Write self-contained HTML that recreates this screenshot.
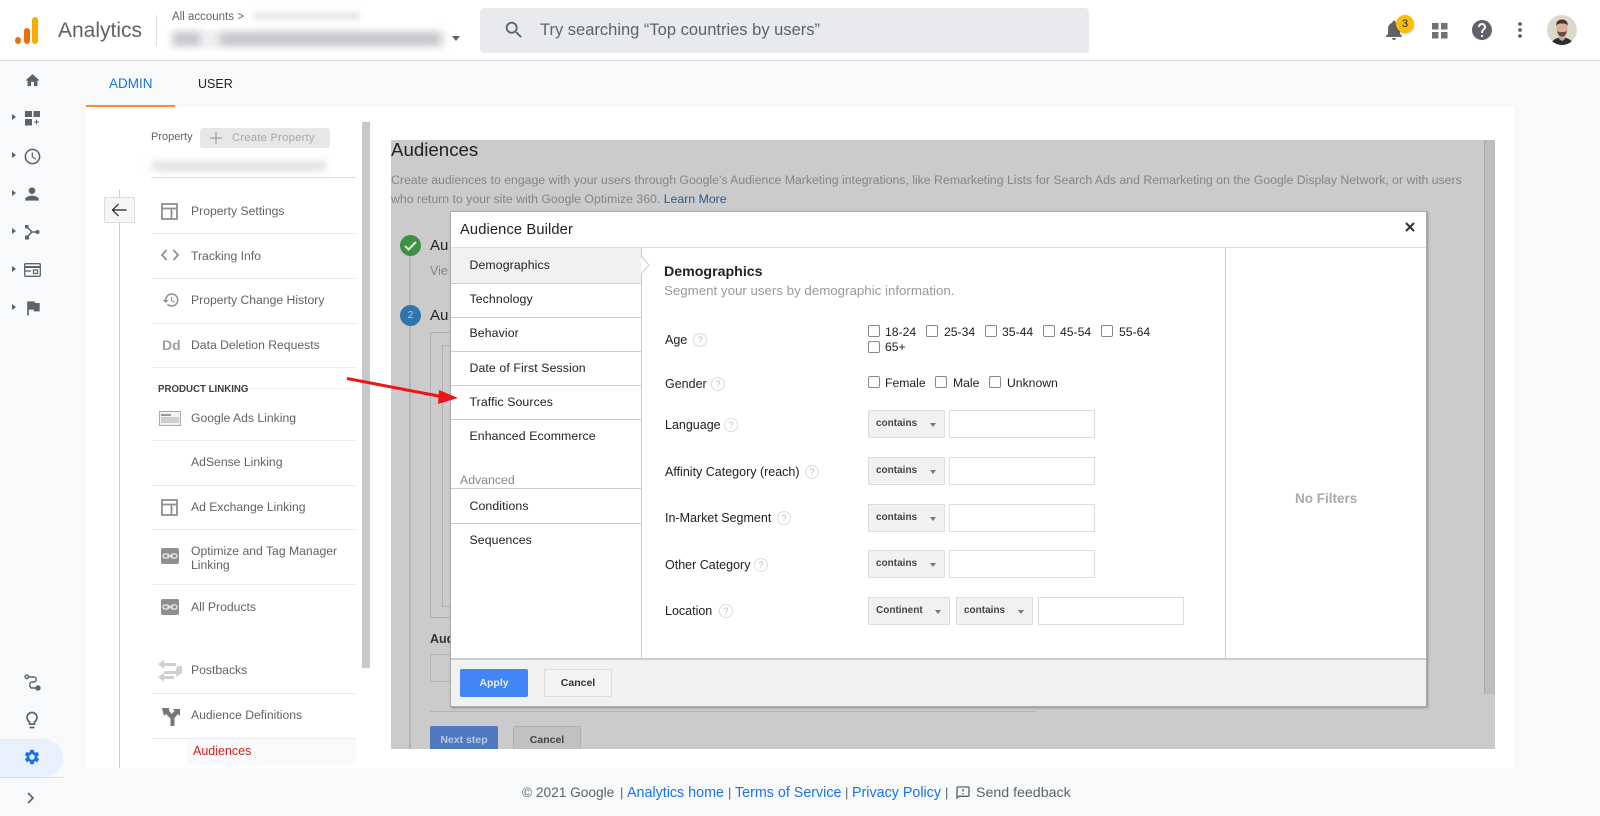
<!DOCTYPE html>
<html><head><meta charset="utf-8">
<style>
html,body{margin:0;padding:0;width:1600px;height:816px;overflow:hidden;background:#f8f9fa;font-family:"Liberation Sans",sans-serif;color:#3c4043}
.a{position:absolute}
.t{position:absolute;white-space:nowrap;line-height:16px;font-size:13px}
.n{color:#5f6368;left:191px;font-size:12.2px}
.s{position:absolute;left:152px;width:204px;height:1px;background:#e8eaed}
.m{left:469.5px;color:#212121;font-size:12.3px;letter-spacing:.1px}
.l{position:absolute;left:451px;width:190px;height:1px;background:#ccc}
.f{left:665px;color:#212121;font-size:12.5px}
.q{position:absolute;width:12px;height:12px;border:1px solid #ddd;border-radius:50%;color:#bbb;font-size:9px;line-height:12px;text-align:center}
.c{position:absolute;width:10px;height:10px;border:1px solid #888;border-radius:2px;background:#fff}
.cl{font-size:12.2px;color:#212121}
.sel{position:absolute;background:#f1f1f1;border:1px solid #ddd;height:26px;border-radius:1px}
.sel b{position:absolute;left:7px;top:6px;font-size:10px;line-height:14px;color:#444}
.sel i{position:absolute;top:12px;width:0;height:0;border:3.5px solid transparent;border-top:4px solid #777;border-bottom:0}
.inp{position:absolute;background:#fff;border:1px solid #ddd;height:26px}
svg{position:absolute;display:block}
</style></head><body>

<!-- header -->
<div class="a" style="left:0;top:0;width:1600px;height:60px;background:#fff;border-bottom:1px solid #dadce0"></div>
<div class="a" style="left:15px;top:37px;width:6px;height:7px;border-radius:50%;background:#e8710a"></div>
<div class="a" style="left:24px;top:28px;width:6px;height:16px;border-radius:3px;background:#e8710a"></div>
<div class="a" style="left:32px;top:17px;width:6px;height:27px;border-radius:3px;background:#f9ab00"></div>
<div class="t" style="left:58px;top:19px;font-size:21px;line-height:24px;color:#5f6368">Analytics</div>
<div class="a" style="left:156px;top:15px;width:1px;height:31px;background:#e0e0e0"></div>
<div class="t" style="left:172px;top:9px;font-size:11.5px;color:#5f6368">All accounts &gt;</div>
<div class="a" style="left:254px;top:12px;width:106px;height:8px;background:#e6e7e9;filter:blur(3px)"></div>
<div class="a" style="left:170px;top:30px;width:276px;height:18px;background:#eeeff0;filter:blur(3px)"></div>
<div class="a" style="left:174px;top:33px;width:26px;height:12px;background:#c2c4c7;filter:blur(4px)"></div>
<div class="a" style="left:220px;top:33px;width:220px;height:12px;background:#c2c4c7;filter:blur(4px)"></div>
<div class="a" style="left:452px;top:36px;width:0;height:0;border:4.5px solid transparent;border-top:5px solid #5f6368;border-bottom:0"></div>
<div class="a" style="left:480px;top:8px;width:609px;height:45px;background:#e8eaed;border-radius:4px"></div>
<svg style="left:503px;top:19px" width="22" height="22" viewBox="0 0 24 24" fill="#5f6368"><path d="M15.5 14h-.79l-.28-.27C15.41 12.59 16 11.11 16 9.5 16 5.91 13.09 3 9.5 3S3 5.91 3 9.5 5.91 16 9.5 16c1.61 0 3.09-.59 4.23-1.57l.27.28v.79l5 4.99L20.49 19l-4.99-5zm-6 0C7.01 14 5 11.99 5 9.5S7.01 5 9.5 5 14 7.01 14 9.5 11.99 14 9.5 14z"/></svg>
<div class="t" style="left:540px;top:22px;font-size:16.5px;color:#5f6368">Try searching “Top countries by users”</div>

<svg style="left:1382px;top:18px" width="24" height="24" viewBox="0 0 24 24" fill="#5f6368"><path d="M12 22c1.1 0 2-.9 2-2h-4c0 1.1.9 2 2 2zm6-6v-5c0-3.07-1.63-5.64-4.5-6.32V4c0-.83-.67-1.5-1.5-1.5s-1.5.67-1.5 1.5v.68C7.64 5.36 6 7.92 6 11v5l-2 2v1h16v-1l-2-2z"/></svg>
<div class="a" style="left:1396px;top:15px;width:18px;height:18px;border-radius:50%;background:#fbbc04;text-align:center;font-size:11px;line-height:18px;color:#222;box-shadow:0 1px 2px rgba(0,0,0,.25)">3</div>
<svg style="left:1428px;top:18px" width="24" height="24" viewBox="0 0 24 24" fill="#6f7276"><path d="M4 5h6.5v6.5H4zM13 5h6.5v6.5H13zM4 14h6.5v6.5H4zM13 14h6.5v6.5H13z"/></svg>
<svg style="left:1470px;top:18px" width="24" height="24" viewBox="0 0 24 24" fill="#5f6368"><path d="M12 2C6.48 2 2 6.48 2 12s4.48 10 10 10 10-4.48 10-10S17.52 2 12 2zm1 17h-2v-2h2v2zm2.07-7.75l-.9.92C13.45 12.9 13 13.5 13 15h-2v-.5c0-1.1.45-2.1 1.17-2.83l1.24-1.26c.37-.36.59-.86.59-1.41 0-1.1-.9-2-2-2s-2 .9-2 2H8c0-2.21 1.79-4 4-4s4 1.79 4 4c0 .88-.36 1.68-.93 2.25z"/></svg>
<svg style="left:1508px;top:18px" width="24" height="24" viewBox="0 0 24 24" fill="#5f6368"><circle cx="12" cy="6" r="1.9"/><circle cx="12" cy="12" r="1.9"/><circle cx="12" cy="18" r="1.9"/></svg>
<svg style="left:1547px;top:15px" width="30" height="30" viewBox="0 0 30 30"><defs><clipPath id="av"><circle cx="15" cy="15" r="15"/></clipPath></defs><g clip-path="url(#av)"><rect width="30" height="30" fill="#ddd8cc"/><path d="M4 30c1-6 6-7 11-8 5 1 10 2 11 8z" fill="#2b2e33"/><path d="M12 20h6v4l-3 2-3-2z" fill="#d0a78f"/><ellipse cx="15" cy="13.5" rx="5.5" ry="7.5" fill="#d9b29b"/><path d="M9.5 11c-1-5 3-6.5 5.500-6.500s6.500 1.500 5.500 6.500c-1-2.500-3-2.500-5.500-2.500s-4.500 0-5.500 2.500z" fill="#4a3528"/><path d="M10 16c1 5 3 5.500 5 5.500s4-.5 5-5.500c-2 1-3 1-5 1s-3 0-5-1z" fill="#6a5040"/></g></svg>

<!-- tabs -->
<div class="t" style="left:109px;top:76px;font-size:13.5px;color:#1a73e8">ADMIN</div>
<div class="t" style="left:198px;top:76px;font-size:12.5px;color:#202124">USER</div>
<div class="a" style="left:86px;top:105px;width:89px;height:2px;background:#f5902a"></div>

<!-- white panel -->
<div class="a" style="left:86px;top:107px;width:1428px;height:661px;background:#fff"></div>

<!-- sidebar icons -->
<svg style="left:23.5px;top:72px" width="17" height="17" viewBox="0 0 24 24" fill="#5f6368"><path d="M10 20v-6h4v6h5v-8h3L12 3 2 12h3v8z"/></svg>
<div class="a" style="left:12px;top:114px;border:3.5px solid transparent;border-left:4px solid #5f6368;border-right:0"></div>
<div class="a" style="left:12px;top:152px;border:3.5px solid transparent;border-left:4px solid #5f6368;border-right:0"></div>
<div class="a" style="left:12px;top:190px;border:3.5px solid transparent;border-left:4px solid #5f6368;border-right:0"></div>
<div class="a" style="left:12px;top:228px;border:3.5px solid transparent;border-left:4px solid #5f6368;border-right:0"></div>
<div class="a" style="left:12px;top:266px;border:3.5px solid transparent;border-left:4px solid #5f6368;border-right:0"></div>
<div class="a" style="left:12px;top:304px;border:3.5px solid transparent;border-left:4px solid #5f6368;border-right:0"></div>
<svg style="left:24px;top:110px" width="17" height="17" viewBox="0 0 17 17" fill="#5f6368"><path d="M1 1h7v6H1zM9.500 1H16v6H9.500zM1 9h7v6.500H1zM12 9.500h1v2h2v1h-2v2h-1v-2h-2v-1h2z"/></svg>
<svg style="left:22.5px;top:146.5px" width="19" height="19" viewBox="0 0 24 24" fill="#5f6368"><path d="M11.990 2C6.470 2 2 6.480 2 12s4.470 10 9.990 10C17.520 22 22 17.520 22 12S17.520 2 11.990 2zM12 20c-4.420 0-8-3.580-8-8s3.580-8 8-8 8 3.580 8 8-3.580 8-8 8zm.5-13H11v6l5.250 3.150.75-1.230-4.500-2.670z"/></svg>
<svg style="left:22px;top:184px" width="20" height="20" viewBox="0 0 24 24" fill="#5f6368"><path d="M12 12c2.210 0 4-1.790 4-4s-1.790-4-4-4-4 1.790-4 4 1.790 4 4 4zm0 2c-2.670 0-8 1.340-8 4v2h16v-2c0-2.660-5.330-4-8-4z"/></svg>
<svg style="left:24px;top:224px" width="16" height="16" viewBox="0 0 16 16" fill="#5f6368" stroke="#5f6368"><path d="M2 2l6 6-6 6M8 8h5" fill="none" stroke-width="1.500"/><rect x="1" y="1" width="3.500" height="3.500" stroke="none"/><rect x="1" y="11.500" width="4" height="4" stroke="none"/><circle cx="13.500" cy="8" r="2" stroke="none"/></svg>
<svg style="left:24px;top:263px" width="17" height="14" viewBox="0 0 17 14" fill="none" stroke="#5f6368" stroke-width="1.300"><rect x=".7" y=".7" width="15.600" height="12.600" rx="1"/><path d="M1 4h15" stroke-width="2"/><path d="M9.500 7h4v3.500h-4zM1 8h6" stroke-width="1.300"/></svg>
<svg style="left:23px;top:298px" width="20" height="20" viewBox="0 0 24 24" fill="#5f6368"><path d="M14.400 6L14 4H5v17h2v-7h5.600l.4 2h7V6z"/></svg>
<svg style="left:24px;top:674px" width="17" height="17" viewBox="0 0 17 17" fill="none" stroke="#5f6368" stroke-width="1.400"><circle cx="2.800" cy="2.800" r="1.700"/><path d="M5 3h5c3 0 3 5 0 5H8c-3 0-3 6 0 6h5"/><circle cx="14" cy="14" r="2" fill="#5f6368"/></svg>
<svg style="left:22px;top:710px" width="20" height="20" viewBox="0 0 24 24" fill="#5f6368"><path d="M9 21c0 .55.45 1 1 1h4c.55 0 1-.45 1-1v-1H9v1zm3-19C8.140 2 5 5.140 5 9c0 2.380 1.190 4.470 3 5.740V17c0 .55.45 1 1 1h6c.55 0 1-.45 1-1v-2.260c1.810-1.270 3-3.360 3-5.740 0-3.860-3.140-7-7-7zm2.850 11.100l-.85.6V16h-4v-2.300l-.85-.6C7.800 12.160 7 10.630 7 9c0-2.760 2.240-5 5-5s5 2.240 5 5c0 1.630-.8 3.160-2.150 4.100z"/></svg>
<div class="a" style="left:0;top:739px;width:63px;height:38px;background:#e8f0fe;border-radius:0 19px 19px 0"></div>
<svg style="left:23px;top:748px" width="18" height="18" viewBox="0 0 24 24" fill="#1a73e8"><path d="M19.140 12.940c.04-.3.06-.61.06-.94 0-.32-.02-.64-.07-.94l2.030-1.580a.49.49 0 0 0 .12-.61l-1.920-3.320a.488.488 0 0 0-.59-.22l-2.390.96c-.5-.38-1.030-.7-1.620-.94l-.36-2.540a.484.484 0 0 0-.48-.41h-3.840c-.24 0-.43.17-.47.41l-.36 2.540c-.59.24-1.130.57-1.620.94l-2.390-.96c-.22-.08-.47 0-.59.22L2.740 8.870c-.12.21-.08.47.12.61l2.030 1.580c-.05.3-.09.63-.09.94s.02.64.07.94l-2.030 1.580a.49.49 0 0 0-.12.61l1.920 3.320c.12.22.37.29.59.22l2.390-.96c.5.38 1.030.7 1.620.94l.36 2.540c.05.24.24.41.48.41h3.840c.24 0 .44-.17.47-.41l.36-2.540c.59-.24 1.130-.56 1.620-.94l2.390.96c.22.08.47 0 .59-.22l1.920-3.320c.12-.22.07-.47-.12-.61l-2.010-1.580zM12 15.600c-1.980 0-3.600-1.620-3.600-3.600s1.620-3.600 3.600-3.600 3.600 1.620 3.600 3.600-1.620 3.600-3.600 3.600z"/></svg>
<div class="a" style="left:0;top:777px;width:63px;height:1px;background:#e0e0e0"></div>
<svg style="left:24px;top:791px" width="14" height="14" viewBox="0 0 14 14" fill="none" stroke="#5f6368" stroke-width="1.700"><path d="M4 2l5 5-5 5"/></svg>

<!-- admin column -->
<div class="a" style="left:119px;top:190px;width:1px;height:578px;background:#ccc"></div>
<div class="a" style="left:104px;top:197px;width:29px;height:24px;background:#f5f5f5;border:1px solid #ddd;border-radius:1px"></div>
<svg style="left:111px;top:202px" width="16" height="16" viewBox="0 0 16 16" fill="none" stroke="#222" stroke-width="1.200"><path d="M15.500 8H1.500M7.500 2L1.500 8l6 6"/></svg>
<div class="t" style="left:151px;top:129px;font-size:11px;color:#5f6368">Property</div>
<div class="a" style="left:200px;top:128px;width:130px;height:20px;background:#e6e7e8;border-radius:3px"></div>
<svg style="left:209px;top:131px" width="14" height="14" viewBox="0 0 14 14" stroke="#a8a8a8" stroke-width="1.400"><path d="M7 1v12M1 7h12"/></svg>
<div class="t" style="left:232px;top:130px;font-size:11.3px;color:#a8a8a8;letter-spacing:.2px">Create Property</div>
<div class="a" style="left:152px;top:162px;width:174px;height:8px;background:#d8dadc;filter:blur(4px)"></div>
<div class="a" style="left:151px;top:177px;width:205px;height:1px;background:#dadce0"></div>

<svg style="left:161px;top:203px" width="17" height="17" viewBox="0 0 17 17" fill="none" stroke="#8f8f8f" stroke-width="1.800"><rect x="1" y="1" width="15" height="15"/><path d="M1 5.500h15M10.500 5.500V16"/></svg>
<div class="t n" style="top:203px">Property Settings</div><div class="s" style="top:233px"></div>
<svg style="left:160px;top:247px" width="20" height="16" viewBox="0 0 20 16" fill="none" stroke="#8f8f8f" stroke-width="1.800"><path d="M6.500 3L2 8l4.500 5M13.500 3L18 8l-4.500 5"/></svg>
<div class="t n" style="top:248px">Tracking Info</div><div class="s" style="top:278px"></div>
<svg style="left:162px;top:291px" width="18" height="18" viewBox="0 0 24 24" fill="#8f8f8f"><path d="M13 3c-4.970 0-9 4.030-9 9H1l3.890 3.890.07.14L9 12H6c0-3.870 3.130-7 7-7s7 3.130 7 7-3.130 7-7 7c-1.930 0-3.680-.79-4.940-2.060l-1.420 1.420C8.270 19.990 10.510 21 13 21c4.970 0 9-4.030 9-9s-4.030-9-9-9zm-1 5v5l4.280 2.540.72-1.210-3.500-2.080V8H12z"/></svg>
<div class="t n" style="top:292px">Property Change History</div><div class="s" style="top:323px"></div>
<div class="t" style="left:162px;top:337px;font-size:14px;font-weight:bold;color:#a0a0a0">Dd</div>
<div class="t n" style="top:337px">Data Deletion Requests</div><div class="s" style="top:367px"></div>
<div class="a" style="left:152px;top:388px;width:204px;height:1px;background:#f0f0f0"></div>
<div class="t" style="left:158px;top:382px;font-size:9.7px;font-weight:bold;color:#3c4043">PRODUCT LINKING</div>

<svg style="left:159px;top:411px" width="22" height="15" viewBox="0 0 22 15"><rect x=".5" y=".5" width="21" height="14" fill="#f2f2f2" stroke="#aaa"/><rect x="2" y="3" width="10" height="2" fill="#999"/><path d="M2 7h18M2 9h18M2 11h18" stroke="#aaa"/></svg>
<div class="t n" style="top:410px">Google Ads Linking</div><div class="s" style="top:440px"></div>
<div class="t n" style="top:454px">AdSense Linking</div><div class="s" style="top:485px"></div>
<svg style="left:161px;top:499px" width="17" height="17" viewBox="0 0 17 17" fill="none" stroke="#8f8f8f" stroke-width="1.800"><rect x="1" y="1" width="15" height="15"/><path d="M1 5.500h15M10.500 5.500V16"/></svg>
<div class="t n" style="top:499px">Ad Exchange Linking</div><div class="s" style="top:529px"></div>
<svg style="left:161px;top:548px" width="18" height="16" viewBox="0 0 18 16"><rect width="18" height="16" rx="2" fill="#8f8f8f"/><g fill="none" stroke="#eee" stroke-width="1.300"><rect x="2" y="6" width="6" height="4" rx="2"/><rect x="10" y="6" width="6" height="4" rx="2"/><path d="M6 8h6"/></g></svg>
<div class="t n" style="top:543px">Optimize and Tag Manager</div>
<div class="t n" style="top:557px">Linking</div><div class="s" style="top:584px"></div>
<svg style="left:161px;top:599px" width="18" height="16" viewBox="0 0 18 16"><rect width="18" height="16" rx="2" fill="#8f8f8f"/><g fill="none" stroke="#eee" stroke-width="1.300"><rect x="2" y="6" width="6" height="4" rx="2"/><rect x="10" y="6" width="6" height="4" rx="2"/><path d="M6 8h6"/></g></svg>
<div class="t n" style="top:599px">All Products</div>
<svg style="left:158px;top:659px" width="24" height="24" viewBox="0 0 24 24" fill="#d0d0d0"><path d="M0 5l6-4v3h12v3H6v3zM24 14l-6 4v-3H6v-3h12V9zM0 18l6-4v3h10v3H6v3zM19 7h5v7h-5z"/></svg>
<div class="t n" style="top:662px">Postbacks</div><div class="s" style="top:693px"></div>
<svg style="left:162px;top:708px" width="18" height="18" viewBox="0 0 18 18" fill="#777"><path d="M0 0h7v2.500L9.500 6l3-3L11 1h7v7l-2-2-3.500 4v8h-4v-7.500L4 6 2 8z"/></svg>
<div class="t n" style="top:707px">Audience Definitions</div><div class="s" style="top:738px"></div>
<div class="a" style="left:187px;top:739px;width:169px;height:26px;background:#f8f9fa"></div>
<div class="t" style="left:193px;top:743px;font-size:12.5px;color:#d32020">Audiences</div>
<div class="a" style="left:362px;top:122px;width:8px;height:546px;background:#c8c8c8"></div>

<!-- dimmed page -->
<div class="a" style="left:391px;top:140px;width:1104px;height:609px;background:#cbcbcb"></div>
<div class="a" style="left:1484px;top:140px;width:11px;height:554px;background:#bdbdbd;border-left:1px solid #aaa;box-sizing:border-box"></div>
<div class="t" style="left:391px;top:140px;font-size:18.7px;line-height:20px;color:#222">Audiences</div>
<div class="t" style="left:391px;top:172px;color:#858585;font-size:12.28px">Create audiences to engage with your users through Google's Audience Marketing integrations, like Remarketing Lists for Search Ads and Remarketing on the Google Display Network, or with users</div>
<div class="t" style="left:391px;top:191px;color:#858585;font-size:12.3px">who return to your site with Google Optimize 360. <span style="color:#2d5a88">Learn More</span></div>
<div class="a" style="left:409px;top:244px;width:2px;height:505px;background:#b4b4b4"></div>
<div class="a" style="left:400px;top:235px;width:21px;height:21px;border-radius:50%;background:#3f9142"></div>
<svg style="left:403px;top:238px" width="15" height="15" viewBox="0 0 15 15" fill="none" stroke="#d8e8d8" stroke-width="2.200"><path d="M2 8l3.500 3.500L13 4"/></svg>
<div class="a" style="left:400px;top:305px;width:21px;height:21px;border-radius:50%;background:#2f74ad;color:#bcd;text-align:center;font-size:10px;line-height:21px">2</div>
<div class="t" style="left:430px;top:238px;font-size:15px;color:#222">Au</div>
<div class="t" style="left:430px;top:263px;font-size:12.5px;color:#858585">Vie</div>
<div class="t" style="left:430px;top:308px;font-size:15px;color:#222">Au</div>
<div class="a" style="left:430px;top:332px;width:40px;height:286px;border:1px solid #b0b0b0;box-sizing:border-box"></div>
<div class="a" style="left:442px;top:345px;width:30px;height:262px;border:1px solid #b0b0b0;box-sizing:border-box"></div>
<div class="t" style="left:430px;top:631px;font-size:12.5px;font-weight:bold;color:#333">Aud</div>
<div class="a" style="left:430px;top:654px;width:40px;height:28px;border:1px solid #b4b4b4;box-sizing:border-box"></div>
<div class="a" style="left:430px;top:711px;width:606px;height:1px;background:#b4b4b4"></div>
<div class="a" style="left:430px;top:726px;width:68px;height:23px;background:#4f79c1;border-radius:2px 2px 0 0;color:#b9c8e0;font-size:10.5px;font-weight:bold;text-align:center;line-height:28px;overflow:hidden">Next step</div>
<div class="a" style="left:513px;top:726px;width:68px;height:23px;background:#c1c1c1;border:1px solid #b0b0b0;border-bottom:0;box-sizing:border-box;border-radius:2px 2px 0 0;color:#444;font-size:10.5px;font-weight:bold;text-align:center;line-height:26px;overflow:hidden">Cancel</div>

<!-- dialog -->
<div class="a" style="left:450px;top:211px;width:977px;height:496px;background:#fff;border:1px solid #aaa;box-sizing:border-box;box-shadow:1px 1px 2px rgba(0,0,0,.3)"></div>
<div class="t" style="left:460px;top:222px;font-size:14.7px;color:#222;letter-spacing:.12px">Audience Builder</div>
<svg style="left:1404px;top:221px" width="12" height="12" viewBox="0 0 12 12" stroke="#333" stroke-width="2"><path d="M2 2l8 8M10 2l-8 8"/></svg>
<div class="a" style="left:451px;top:247px;width:975px;height:1px;background:#ddd"></div>
<div class="a" style="left:451px;top:248px;width:190px;height:35px;background:#f1f1f1"></div>
<div class="a" style="left:641px;top:248px;width:1px;height:410px;background:#ccc"></div>
<div class="a" style="left:1225px;top:248px;width:1px;height:410px;background:#ccc"></div>
<svg style="left:641px;top:254px" width="10" height="22" viewBox="0 0 10 22"><path d="M0 2l8 9-8 9z" fill="#fff"/><path d="M0 2l8 9-8 9" fill="none" stroke="#ccc"/></svg>
<div class="t m" style="top:257px">Demographics</div><div class="l" style="top:283px"></div>
<div class="t m" style="top:291px">Technology</div><div class="l" style="top:317px"></div>
<div class="t m" style="top:325px">Behavior</div><div class="l" style="top:351px"></div>
<div class="t m" style="top:360px">Date of First Session</div><div class="l" style="top:385px"></div>
<div class="t m" style="top:394px">Traffic Sources</div><div class="l" style="top:419px"></div>
<div class="t m" style="top:428px">Enhanced Ecommerce</div>
<div class="t" style="left:460px;top:472px;font-size:12.3px;color:#888">Advanced</div><div class="l" style="top:488px"></div>
<div class="t m" style="top:498px">Conditions</div><div class="l" style="top:523px"></div>
<div class="t m" style="top:532px">Sequences</div>

<div class="t" style="left:664px;top:264px;font-size:14.2px;font-weight:bold;color:#222">Demographics</div>
<div class="t" style="left:664px;top:283px;font-size:13.3px;color:#9a9a9a">Segment your users by demographic information.</div>

<div class="t f" style="top:332px">Age</div><div class="q" style="left:693px;top:333px">?</div>
<div class="t f" style="top:376px">Gender</div><div class="q" style="left:711px;top:377px">?</div>
<div class="t f" style="top:417px">Language</div><div class="q" style="left:724px;top:418px">?</div>
<div class="t f" style="top:464px">Affinity Category (reach)</div><div class="q" style="left:805px;top:465px">?</div>
<div class="t f" style="top:510px">In-Market Segment</div><div class="q" style="left:777px;top:511px">?</div>
<div class="t f" style="top:557px">Other Category</div><div class="q" style="left:754px;top:558px">?</div>
<div class="t f" style="top:603px">Location</div><div class="q" style="left:719px;top:604px">?</div>

<div class="c" style="left:868px;top:325px"></div><div class="t cl" style="left:885px;top:324px">18-24</div>
<div class="c" style="left:926px;top:325px"></div><div class="t cl" style="left:944px;top:324px">25-34</div>
<div class="c" style="left:985px;top:325px"></div><div class="t cl" style="left:1002px;top:324px">35-44</div>
<div class="c" style="left:1043px;top:325px"></div><div class="t cl" style="left:1060px;top:324px">45-54</div>
<div class="c" style="left:1101px;top:325px"></div><div class="t cl" style="left:1119px;top:324px">55-64</div>
<div class="c" style="left:868px;top:341px"></div><div class="t cl" style="left:885px;top:339px">65+</div>
<div class="c" style="left:868px;top:376px"></div><div class="t cl" style="left:885px;top:375px">Female</div>
<div class="c" style="left:935px;top:376px"></div><div class="t cl" style="left:953px;top:375px">Male</div>
<div class="c" style="left:989px;top:376px"></div><div class="t cl" style="left:1007px;top:375px">Unknown</div>

<div class="sel" style="left:868px;top:410px;width:75px"><b>contains</b><i style="left:61px"></i></div><div class="inp" style="left:949px;top:410px;width:144px"></div>
<div class="sel" style="left:868px;top:457px;width:75px"><b>contains</b><i style="left:61px"></i></div><div class="inp" style="left:949px;top:457px;width:144px"></div>
<div class="sel" style="left:868px;top:504px;width:75px"><b>contains</b><i style="left:61px"></i></div><div class="inp" style="left:949px;top:504px;width:144px"></div>
<div class="sel" style="left:868px;top:550px;width:75px"><b>contains</b><i style="left:61px"></i></div><div class="inp" style="left:949px;top:550px;width:144px"></div>
<div class="sel" style="left:868px;top:597px;width:80px"><b>Continent</b><i style="left:66px"></i></div>
<div class="sel" style="left:956px;top:597px;width:75px"><b>contains</b><i style="left:61px"></i></div>
<div class="inp" style="left:1038px;top:597px;width:144px"></div>

<div class="t" style="left:1295px;top:491px;font-size:13.5px;font-weight:bold;color:#aaa">No Filters</div>

<div class="a" style="left:451px;top:658px;width:975px;height:48px;background:#f1f1f1;border-top:2px solid #ccc;box-sizing:border-box"></div>
<div class="a" style="left:460px;top:669px;width:68px;height:28px;background:#4285f4;border-radius:2px;color:#e8f0fe;font-size:10.5px;font-weight:bold;text-align:center;line-height:28px">Apply</div>
<div class="a" style="left:544px;top:669px;width:68px;height:28px;background:#f3f3f3;border:1px solid #ddd;box-sizing:border-box;border-radius:2px;color:#333;font-size:10.5px;font-weight:bold;text-align:center;line-height:27px">Cancel</div>

<!-- red arrow -->
<svg style="left:340px;top:370px" width="125" height="40" viewBox="0 0 125 40"><path d="M7 8.500L101 26.500" stroke="#f01414" stroke-width="3" fill="none"/><path d="M118 28L99 20l-1 14z" fill="#f01414"/></svg>

<!-- footer -->
<div class="t" style="left:522px;top:785px;font-size:13.7px;color:#5f6368">© 2021 Google</div>
<div class="t" style="left:620px;top:785px;font-size:13px;color:#5f6368">|</div>
<div class="t" style="left:627px;top:785px;font-size:14.3px;color:#1a73e8">Analytics home</div>
<div class="t" style="left:728px;top:785px;font-size:13px;color:#5f6368">|</div>
<div class="t" style="left:735px;top:785px;font-size:14.3px;color:#1a73e8">Terms of Service</div>
<div class="t" style="left:845px;top:785px;font-size:13px;color:#5f6368">|</div>
<div class="t" style="left:852px;top:785px;font-size:14.3px;color:#1a73e8">Privacy Policy</div>
<div class="t" style="left:945px;top:785px;font-size:13px;color:#5f6368">|</div>
<svg style="left:955px;top:785px" width="16" height="16" viewBox="0 0 24 24" fill="#5f6368"><path d="M20 2H4c-1.100 0-2 .9-2 2v18l4-4h14c1.100 0 2-.9 2-2V4c0-1.100-.9-2-2-2zm0 14H5.170L4 17.170V4h16v12zM11 12h2v2h-2zm0-6h2v4h-2z"/></svg>
<div class="t" style="left:976px;top:785px;font-size:14.2px;color:#5f6368">Send feedback</div>
</body></html>
